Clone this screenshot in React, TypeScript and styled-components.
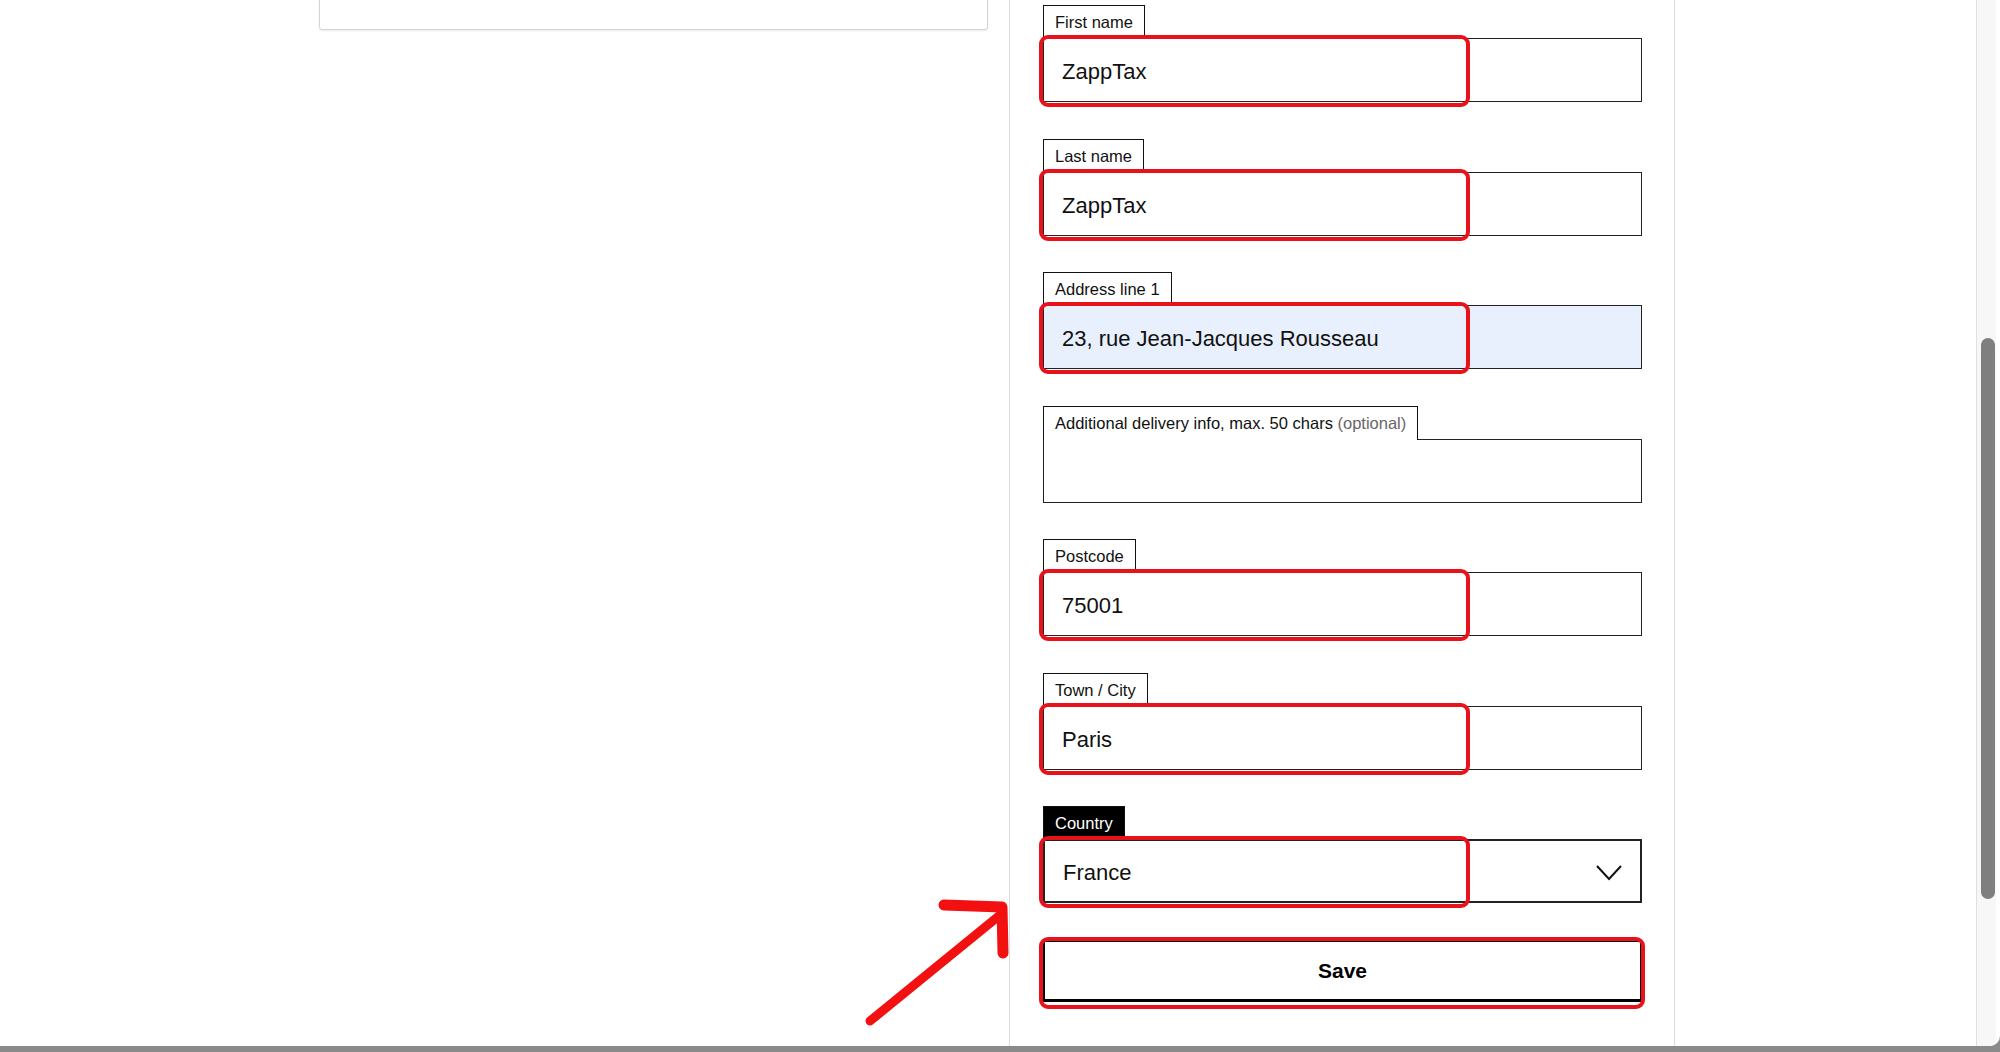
import React from "react";
import styled, { createGlobalStyle } from "styled-components";

const Global = createGlobalStyle`
  html, body { margin: 0; padding: 0; background: #8a8a8a; }
  body { font-family: "Liberation Sans", Arial, sans-serif; overflow: hidden; }
`;

const Window = styled.div`
  position: relative;
  width: 2000px;
  height: 1046px;
  background: #fff;
  border-bottom-right-radius: 10px;
  display: flex;
  overflow: hidden;
`;

const LeftArea = styled.div`
  width: 1009px;
  padding-left: 319px;
  box-sizing: border-box;
`;

const Card = styled.div`
  width: 667px;
  height: 38px;
  margin-top: -10px;
  border: 1px solid #d4d4d4;
  border-radius: 3px;
  box-shadow: 0 1px 2px rgba(0,0,0,0.08);
`;

const Panel = styled.div`
  width: 666px;
  box-sizing: border-box;
  border-left: 1px solid #dcdcdc;
  border-right: 1px solid #dcdcdc;
  padding: 5px 33px 0 33px;
  display: flex;
  flex-direction: column;
  gap: 36.5px;
`;

const Field = styled.div`
  position: relative;
  display: flex;
  flex-direction: column;
  align-items: flex-start;
`;

const Label = styled.div<{ $dark?: boolean }>`
  font-size: 16.5px;
  line-height: 33px;
  height: 34px;
  box-sizing: border-box;
  padding: 0 11px;
  border: 1px solid #111;
  border-bottom: none;
  background: ${p => (p.$dark ? "#000" : "#fff")};
  color: ${p => (p.$dark ? "#fff" : "#111")};
  margin-bottom: -1px;
  position: relative;
  z-index: 1;
`;

const Optional = styled.span`
  color: #666;
`;

const Input = styled.div<{ $fill?: boolean; $thick?: boolean }>`
  width: 599px;
  height: 64px;
  box-sizing: border-box;
  border: ${p => (p.$thick ? "2px" : "1px")} solid #222;
  background: ${p => (p.$fill ? "#e8f0fe" : "#fff")};
  display: flex;
  align-items: center;
  justify-content: space-between;
  padding: 4px 18px 0 18px;
  font-size: 22px;
  color: #111;
`;

const Highlight = styled.div<{ $w: number; $top: number; $h: number }>`
  position: absolute;
  left: -4px;
  top: ${p => p.$top}px;
  width: ${p => p.$w}px;
  height: ${p => p.$h}px;
  border: 4px solid #e8121b;
  border-radius: 9px;
  box-sizing: border-box;
  pointer-events: none;
  z-index: 2;
`;

const SaveButton = styled.button`
  width: 599px;
  height: 62px;
  margin-top: 37px;
  border: 2px solid #000;
  border-bottom-width: 3px;
  background: #fff;
  font-family: "Liberation Sans", Arial, sans-serif;
  font-weight: 700;
  font-size: 21px;
  color: #000;
`;

const Scrollbar = styled.div`
  position: absolute;
  right: 4px;
  top: 0;
  bottom: 0;
  width: 19px;
  background: #f7f7f7;
  border-left: 1px solid #e0e0e0;
`;

const Thumb = styled.div`
  position: absolute;
  left: 4px;
  right: 1px;
  top: 338px;
  height: 561px;
  border-radius: 8px;
  background: #7f7f7f;
`;

const Arrow = styled.svg`
  position: absolute;
  left: 860px;
  top: 893px;
  pointer-events: none;
`;

const fields = [
  { label: "First name", value: "ZappTax" },
  { label: "Last name", value: "ZappTax" },
  { label: "Address line 1", value: "23, rue Jean-Jacques Rousseau", fill: true },
  { label: "Additional delivery info, max. 50 chars", optional: true, value: "", noMark: true },
  { label: "Postcode", value: "75001" },
  { label: "Town / City", value: "Paris" },
];

export default function App() {
  return (
    <>
      <Global />
      <Window>
        <LeftArea>
          <Card />
        </LeftArea>
        <Panel>
          {fields.map(f => (
            <Field key={f.label}>
              <Label>
                {f.label}
                {f.optional && <Optional> (optional)</Optional>}
              </Label>
              <Input $fill={f.fill}>{f.value}</Input>
              {!f.noMark && <Highlight $w={431} $top={30} $h={72} />}
            </Field>
          ))}
          <Field>
            <Label $dark>Country</Label>
            <Input $thick>
              France
              <svg width="26" height="16" viewBox="0 0 26 16">
                <path d="M1 1 L13 14 L25 1" fill="none" stroke="#111" strokeWidth="2" />
              </svg>
            </Input>
            <Highlight $w={431} $top={30} $h={72} />
            <SaveButton>Save</SaveButton>
            <Highlight $w={606} $top={131} $h={72} />
          </Field>
        </Panel>
        <Arrow width="160" height="140" viewBox="0 0 160 140">
          <path d="M10 128 L140 22" stroke="#f21010" strokeWidth="9" strokeLinecap="round" fill="none" />
          <path d="M84 12 L142 14 L143 60" stroke="#f21010" strokeWidth="11" strokeLinecap="round" strokeLinejoin="round" fill="none" />
        </Arrow>
        <Scrollbar>
          <Thumb />
        </Scrollbar>
      </Window>
    </>
  );
}
